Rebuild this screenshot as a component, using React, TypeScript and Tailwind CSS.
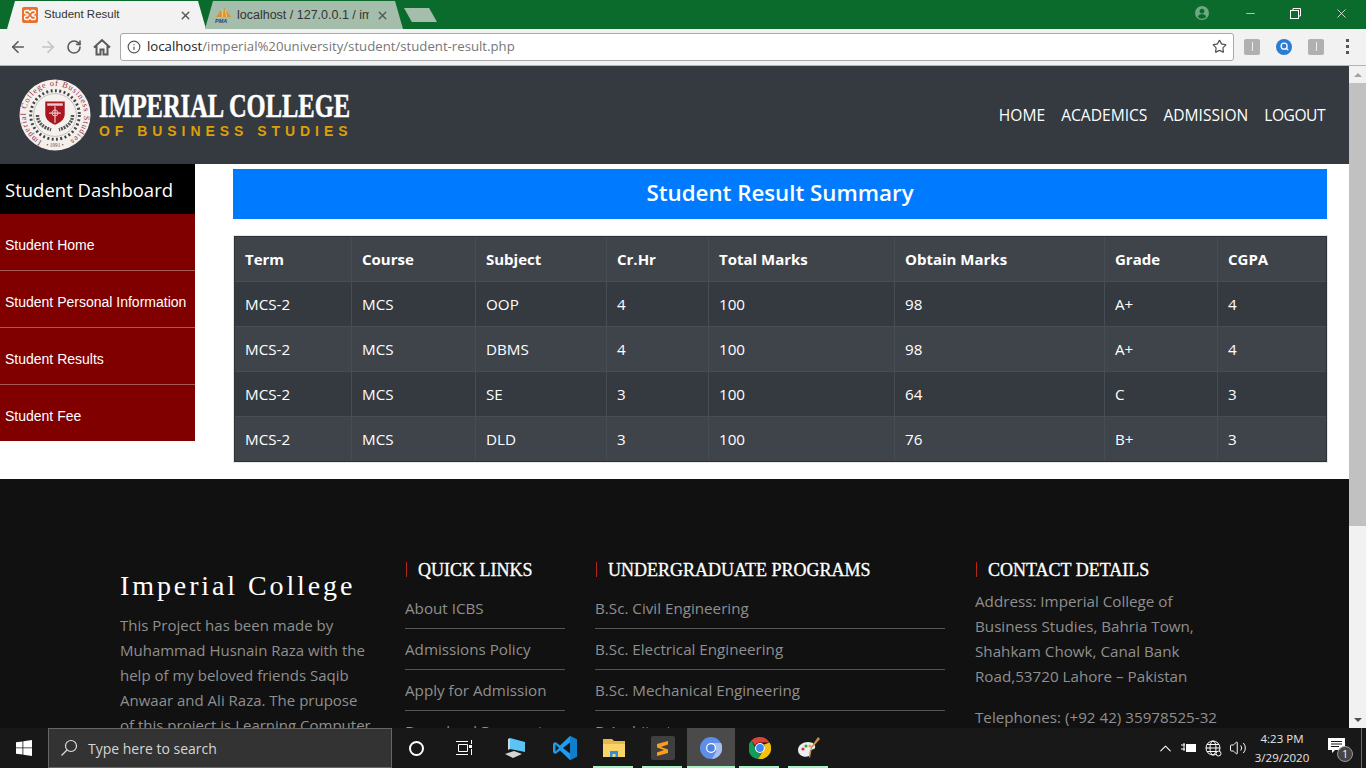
import React from 'react';
import { ArrowLeft, ArrowRight, RotateCw, Info, Star, X, Minus, ChevronUp, Volume2, Search } from 'lucide-react';

const sideLinks = ['Student Home', 'Student Personal Information', 'Student Results', 'Student Fee'];
const heads = ['Term', 'Course', 'Subject', 'Cr.Hr', 'Total Marks', 'Obtain Marks', 'Grade', 'CGPA'];
const colWidths = [117, 124, 131, 102, 186, 210, 113, 109];
const rows = [
  ['MCS-2', 'MCS', 'OOP', '4', '100', '98', 'A+', '4'],
  ['MCS-2', 'MCS', 'DBMS', '4', '100', '98', 'A+', '4'],
  ['MCS-2', 'MCS', 'SE', '3', '100', '64', 'C', '3'],
  ['MCS-2', 'MCS', 'DLD', '3', '100', '76', 'B+', '3'],
];
const quickLinks = ['About ICBS', 'Admissions Policy', 'Apply for Admission', 'Download Prospectus'];
const programs = ['B.Sc. Civil Engineering', 'B.Sc. Electrical Engineering', 'B.Sc. Mechanical Engineering', 'B.Architecture'];

// Browser tabs and toolbar
const BrowserChrome = () => (
  <div className="h-[66px] shrink-0 font-['Open_Sans',sans-serif]">
    <div className="h-[29px] bg-[#0a6b2d] flex items-end relative">
      <div className="ml-[7px] w-[199px] h-[28px] bg-[#f2f2f2] [clip-path:polygon(0_100%,8px_0,191px_0,100%_100%)] flex items-center pl-[15px] pr-[14px]">
        <XamppIcon />
        <span className="ml-[6px] text-[11.500px] text-[#333] flex-1 font-['Liberation_Sans',sans-serif]">Student Result</span>
        <X size={13} strokeWidth={2.5} className="text-[#555]" />
      </div>
      <div className="-ml-[1px] w-[198px] h-[28px] bg-[#a5bdab] [clip-path:polygon(0_100%,8px_0,190px_0,100%_100%)] flex items-center pl-[10px] pr-[14px]">
        <PmaIcon />
        <span className="ml-[5px] text-[12.500px] text-[#333] w-[132px] overflow-hidden whitespace-nowrap font-['Liberation_Sans',sans-serif]">localhost / 127.0.0.1 / imp</span>
        <span className="flex-1" />
        <X size={13} strokeWidth={2.5} className="text-[#555]" />
      </div>
      <div className="ml-[1px] mb-[7px] w-[33px] h-[14px] bg-[#a5bdab] [clip-path:polygon(0_0,76%_0,100%_100%,24%_100%)]" />
      <div className="flex-1" />
      <div className="self-start h-[29px] flex items-center text-white">
        <svg width="14" height="14" viewBox="0 0 14 14" className="mr-[35px] mb-[3px]">
          <circle cx="7" cy="7" r="7" fill="#6fa981" />
          <circle cx="7" cy="5.2" r="2.4" fill="#0a6b2d" />
          <path d="M2.8 11c.6-2.2 2.4-3 4.200-3s3.600.8 4.200 3a6 6 0 0 1-8.400 0z" fill="#0a6b2d" />
        </svg>
        <Minus size={13} strokeWidth={1.2} className="mr-[33px] mb-[3px]" />
        <svg width="11" height="11" viewBox="0 0 11 11" fill="none" stroke="white" className="mr-[33px] mb-[3px]">
          <rect x="0.5" y="2.5" width="8" height="8" />
          <path d="M3 2.500V.5h7.500v7.500H8.500" />
        </svg>
        <X size={15} strokeWidth={1.2} className="mr-[17px] mb-[3px]" />
      </div>
    </div>
    <div className="h-[37px] bg-[#f2f2f2] border-b border-[#b4b4b4] flex items-center pb-[1px]">
      <ArrowLeft size={18} strokeWidth={2.2} className="ml-[9px] text-[#5a5a5a]" />
      <ArrowRight size={18} strokeWidth={2.2} className="ml-[12px] text-[#c4c4c4]" />
      <RotateCw size={16} strokeWidth={2.4} className="ml-[9px] text-[#5a5a5a]" />
      <svg width="18" height="18" viewBox="0 0 18 18" fill="none" stroke="#5a5a5a" strokeWidth="2" className="ml-[11px]">
        <path d="M1 9.500 9 2l8 7.500M3.500 8v8.500H7.500V11.500h3v5h4V8" />
      </svg>
      <div className="ml-[9px] w-[1114px] h-[28px] bg-white border border-[#a9a9a9] rounded-[3px] flex items-center pl-[6px] pr-[6px]">
        <Info size={14} strokeWidth={2} className="text-[#555]" />
        <span className="ml-[6px] text-[13.200px] text-[#777] flex-1 whitespace-nowrap">
          <span className="text-[#222]">localhost</span>/imperial%20university/student/student-result.php
        </span>
        <Star size={15} strokeWidth={2} className="text-[#555]" />
      </div>
      <div className="ml-[10px] w-[16px] h-[16px] bg-[#b0b0b0] rounded-[2px] flex items-center justify-center">
        <span className="w-[1px] h-[9px] bg-[#eee]" />
      </div>
      <div className="ml-[16px] w-[16px] h-[16px] bg-[#2b7cd3] rounded-full flex items-center justify-center">
        <Search size={9} strokeWidth={3.5} className="text-white" />
      </div>
      <div className="ml-[16px] w-[16px] h-[16px] bg-[#b0b0b0] rounded-[2px] flex items-center justify-center">
        <span className="w-[1px] h-[9px] bg-[#eee]" />
      </div>
      <div className="ml-[22px] flex flex-col gap-[3px]">
        <span className="w-[3px] h-[3px] bg-[#555]" />
        <span className="w-[3px] h-[3px] bg-[#555]" />
        <span className="w-[3px] h-[3px] bg-[#555]" />
      </div>
    </div>
  </div>
);

const XamppIcon = () => (
  <svg width="16" height="16" viewBox="0 0 16 16">
    <rect width="16" height="16" rx="2" fill="#e8702a" />
    <path d="M4 3.500h2.500L8 5.500l1.500-2H12c1 0 1.500.8 1.500 1.800 0 .9-.5 1.700-1.500 1.700h-1L10 8l1 1h1c1 0 1.500.8 1.500 1.700 0 1-.5 1.800-1.500 1.800H9.500L8 10.500l-1.500 2H4c-1 0-1.500-.8-1.500-1.800C2.500 9.800 3 9 4 9h1l1-1-1-1H4C3 7 2.500 6.200 2.500 5.300 2.500 4.300 3 3.500 4 3.500z" fill="none" stroke="#fff" strokeWidth="1.400" />
  </svg>
);

const PmaIcon = () => (
  <svg width="17" height="16" viewBox="0 0 17 16">
    <path d="M1 10C3 8 5 4 7 2l1 8zM8 10l1-9c2 2 5 6 7 9z" fill="#d9952b" />
    <path d="M7 2l.5 8M10.500 3l1 7" stroke="#f5e2a8" strokeWidth=".7" />
    <text x="0" y="15.500" fontSize="5.500" fontWeight="700" fontStyle="italic" fill="#2c3e70" fontFamily="Liberation Sans, sans-serif">PMA</text>
  </svg>
);

// College seal, drawn since there is no image file
const Seal = () => (
  <svg width="74" height="72" viewBox="0 0 74 74" className="shrink-0">
    <defs>
      <path id="sealRing" d="M23.500 64 A30 30 0 1 1 50.500 64" />
    </defs>
    <circle cx="37" cy="37" r="36.500" fill="#f4f0ee" />
    <text fontSize="8.500" fill="#97303a" fontFamily="Liberation Serif, serif">
      <textPath href="#sealRing" textLength="158">Imperial College of Business Studies</textPath>
    </text>
    <text x="37" y="70" textAnchor="middle" fontSize="5.500" fill="#555" fontFamily="Liberation Serif, serif">• 1991 •</text>
    <circle cx="37" cy="37" r="25" fill="none" stroke="#444" strokeWidth="3" strokeDasharray="2 2.500" />
    <circle cx="37" cy="37" r="22" fill="#f4f1ef" stroke="#aaa" strokeWidth=".7" />
    <path d="M19 37c0 8 6 13 14 15M55 37c0 8-6 13-14 15" fill="none" stroke="#555" strokeWidth="3.500" strokeDasharray="2 1" />
    <path d="M27 23h20v13c0 6-5 9-10 11-5-2-10-5-10-11z" fill="#a91620" />
    <path d="M37 28v17M31 35h12" stroke="#e9c9c9" strokeWidth="1.200" />
    <circle cx="37" cy="35" r="3" fill="none" stroke="#e9c9c9" />
    <rect x="29" y="25" width="16" height="2.500" fill="#e9c9c9" />
  </svg>
);

const SiteHeader = () => (
  <header className="h-[98px] shrink-0 bg-[#343a40] flex items-center pl-[18px] pr-[24px]">
    <Seal />
    <div className="ml-[7px] -mt-[2px] w-[251px]">
      <div className="font-['Liberation_Serif',serif] font-bold text-[33px] leading-[34px] text-white [-webkit-text-stroke:0.5px_white] whitespace-nowrap origin-left scale-x-[0.742]">IMPERIAL COLLEGE</div>
      <div className="font-['Liberation_Sans',sans-serif] font-bold text-[14px] leading-[16px] tracking-[4.950px] text-[#dd9f0a] whitespace-nowrap">OF BUSINESS STUDIES</div>
    </div>
    <nav className="ml-auto mt-[2px] flex gap-[16px] text-white text-[15.600px] font-['Open_Sans',sans-serif]">
      <span>HOME</span>
      <span>ACADEMICS</span>
      <span>ADMISSION</span>
      <span className="tracking-[-0.5px]">LOGOUT</span>
    </nav>
  </header>
);

const Sidebar = () => (
  <aside className="w-[195px] shrink-0">
    <div className="h-[50px] bg-black text-white text-[18.500px] flex items-center pl-[5px] pt-[2px] font-['Open_Sans',sans-serif]">Student Dashboard</div>
    {sideLinks.map((link, i) => (
      <div
        key={link}
        className={`bg-[#800000] text-white text-[14px] flex items-center pl-[5px] pt-[6px] font-['Liberation_Sans',sans-serif] ${i < 3 ? 'h-[57px] border-b border-[#a85a5a]' : 'h-[56px]'}`}
      >
        {link}
      </div>
    ))}
  </aside>
);

const ResultPanel = () => (
  <main className="flex-1 pl-[38px] pr-[22px] pt-[5px] font-['Open_Sans',sans-serif]">
    <h1 className="h-[50px] pb-[3px] bg-[#007bff] text-white text-[22.300px] font-semibold flex items-center justify-center">Student Result Summary</h1>
    <table className="mt-[17px] ml-[1px] w-[1092px] table-fixed border-collapse outline outline-1 -outline-offset-1 outline-[#2e3338] shadow-[0_0_0_1px_#e6e6e6] text-white text-[15.200px]">
      <colgroup>
        {colWidths.map((w, i) => (
          <col key={i} style={{ width: w }} />
        ))}
      </colgroup>
      <thead>
        <tr className="h-[45px] bg-[#3f444b]">
          {heads.map((h) => (
            <th key={h} className="border border-[#454d55] text-left font-bold text-[15px] pl-[10px]">{h}</th>
          ))}
        </tr>
      </thead>
      <tbody>
        {rows.map((row, i) => (
          <tr key={i} className={`h-[45px] ${i % 2 === 0 ? 'bg-[#343a40]' : 'bg-[#3f444b]'}`}>
            {row.map((cell, j) => (
              <td key={j} className="border border-[#454d55] pl-[10px]">{cell}</td>
            ))}
          </tr>
        ))}
      </tbody>
    </table>
  </main>
);

const FooterHeading = ({ children }: { children: React.ReactNode }) => (
  <h3 className="ml-[1px] pl-[11px] pt-[2px] border-l border-[#b0281c] h-[15px] flex items-center font-['Liberation_Serif',serif] font-normal text-white [-webkit-text-stroke:0.3px_white] text-[18px] whitespace-nowrap">{children}</h3>
);

const LinkList = ({ items }: { items: string[] }) => (
  <ul className="mt-[11px]">
    {items.map((item) => (
      <li key={item} className="h-[41px] flex items-center border-b border-[#555] text-[#8f8f8f] text-[15.200px] whitespace-nowrap">{item}</li>
    ))}
  </ul>
);

const SiteFooter = () => (
  <footer className="bg-[#111] h-[300px] flex pl-[120px] pt-[83px] font-['Open_Sans',sans-serif]">
    <div className="w-[285px] pt-[8px]">
      <h2 className="font-['Liberation_Serif',serif] text-white text-[28px] leading-[32px] tracking-[2.900px]">Imperial College</h2>
      <p className="mt-[11px] w-[255px] text-[#8f8f8f] text-[15px] leading-[25px]">
        This Project has been made by Muhammad Husnain Raza with the help of my beloved friends Saqib Anwaar and Ali Raza. The prupose of this project is Learning Computer
      </p>
    </div>
    <div className="w-[160px]">
      <FooterHeading>QUICK LINKS</FooterHeading>
      <LinkList items={quickLinks} />
    </div>
    <div className="ml-[30px] w-[350px]">
      <FooterHeading>UNDERGRADUATE PROGRAMS</FooterHeading>
      <LinkList items={programs} />
    </div>
    <div className="ml-[30px] w-[240px]">
      <FooterHeading>CONTACT DETAILS</FooterHeading>
      <p className="mt-[12px] text-[#8f8f8f] text-[15.200px] leading-[25px]">
        Address: Imperial College of Business Studies, Bahria Town, Shahkam Chowk, Canal Bank Road,53720 Lahore – Pakistan
      </p>
      <p className="mt-[16px] text-[#8f8f8f] text-[15.200px] leading-[25px] whitespace-nowrap">Telephones: (+92 42) 35978525-32</p>
    </div>
  </footer>
);

const Scrollbar = () => (
  <div className="w-[17px] shrink-0 bg-[#f1f1f1] flex flex-col items-center">
    <div className="h-[17px] flex items-center justify-center">
      <span className="w-0 h-0 border-x-[4px] border-x-transparent border-b-[4px] border-b-[#a3a3a3]" />
    </div>
    <div className="w-full h-[443px] bg-[#c1c1c1]" />
    <div className="flex-1" />
    <div className="h-[17px] flex items-center justify-center">
      <span className="w-0 h-0 border-x-[4px] border-x-transparent border-t-[4px] border-t-[#505050]" />
    </div>
  </div>
);

const TaskIcon = ({ children, active, open }: { children: React.ReactNode; active?: boolean; open?: boolean }) => (
  <div className={`relative h-full flex items-center justify-center ${active ? 'w-[48px] bg-[#4a4a4a]' : 'w-[49px]'}`}>
    {children}
    {open && <span className={`absolute bottom-0 h-[2px] bg-[#a9f0c4] ${active ? 'inset-x-0' : 'left-[4px] right-[5px]'}`} />}
  </div>
);

const Taskbar = () => (
  <div className="h-[40px] shrink-0 bg-[#181818] flex items-center font-['Open_Sans',sans-serif]">
    <svg width="16" height="16" viewBox="0 0 16 16" className="ml-[16px]">
      <path d="M0 2.300 6.500 1.400V7.500H0zM7.300 1.300 16 0V7.500H7.300zM0 8.300H6.500V14.600L0 13.700zM7.300 8.300H16V16L7.300 14.700z" fill="#fff" />
    </svg>
    <div className="ml-[16px] w-[344px] h-full bg-[#333] border border-[#666] flex items-center pl-[11px]">
      <svg width="18" height="18" viewBox="0 0 18 18" fill="none" stroke="#ddd" strokeWidth="1.200">
        <circle cx="11" cy="7" r="5.500" />
        <path d="M7 11l-5.500 5.500" />
      </svg>
      <span className="ml-[10px] text-[#d5d5d5] text-[14px]">Type here to search</span>
    </div>
    <div className="ml-[17px] w-[15px] h-[15px] rounded-full border-[2.500px] border-white" />
    <svg width="16" height="16" viewBox="0 0 16 16" fill="none" stroke="#fff" className="ml-[32px]">
      <path d="M0 1.500h12M2.500 4.500h9v7h-9zM0 14.500h12" />
      <rect x="13" y="5" width="3" height="3" fill="#fff" stroke="none" />
      <path d="M15.500 0v4M15.500 9v6" />
    </svg>
    <div className="ml-[19px] h-full flex items-center">
      <TaskIcon>
        <svg width="24" height="22" viewBox="0 0 24 22">
          <path d="M6 1l15 4v10L6 12z" fill="#5cc3f5" />
          <path d="M6 1l-2 1v11l2-1z" fill="#cfd6dc" />
          <path d="M1 17l9-3 8 3-9 4z" fill="#d5d5d5" />
        </svg>
      </TaskIcon>
      <TaskIcon>
        <svg width="24" height="24" viewBox="0 0 24 24">
          <path d="M17 0l7 3.500v17L17 24 7 14.500l-4.500 3.500L0 16.500v-9L2.500 6 7 9.500z" fill="#1f9cf0" />
          <path d="M17 6.500v11L10 12z" fill="#181818" />
          <path d="M2.500 8.500v7L6 12z" fill="#181818" />
          <path d="M17 0l7 3.500v17L17 24z" fill="#0f7fcc" />
        </svg>
      </TaskIcon>
      <TaskIcon open>
        <svg width="24" height="20" viewBox="0 0 24 20">
          <path d="M1 1h9l2 2h11v4H1z" fill="#e9b64a" />
          <path d="M1 6h22v13H1z" fill="#fbd469" />
          <path d="M8 19v-6h8v6h-2.500v-3h-3v3z" fill="#2f8fdc" />
        </svg>
      </TaskIcon>
      <TaskIcon open>
        <div className="w-[24px] h-[24px] bg-[#3f3f3f] rounded-[2px] flex items-center justify-center">
          <svg width="13" height="17" viewBox="0 0 13 17">
            <path d="M12 1v3.500L5 7l7 2.500V13L1 16v-3.500L8 10 1 7.500V4z" fill="#f89d1c" />
          </svg>
        </div>
      </TaskIcon>
      <TaskIcon active open>
        <svg width="22" height="22" viewBox="0 0 22 22">
          <circle cx="11" cy="11" r="11" fill="#5e8ee8" />
          <path d="M11 6h10a11 11 0 0 1-9 16l4.500-8z" fill="#a5c0f0" />
          <circle cx="11" cy="11" r="5" fill="#fff" />
          <circle cx="11" cy="11" r="3.800" fill="#4f82de" />
        </svg>
      </TaskIcon>
      <TaskIcon open>
        <svg width="22" height="22" viewBox="0 0 22 22">
          <path d="M11 0a11 11 0 0 1 9.500 5.500H11a5.500 5.500 0 0 0-5 3L2.300 3.500A11 11 0 0 1 11 0z" fill="#db4437" />
          <path d="M2.300 3.500L6.500 11a5 5 0 0 0 6 4.500L9 22A11 11 0 0 1 2.300 3.500z" fill="#0f9d58" />
          <path d="M20.500 5.500A11 11 0 0 1 9 22l4.500-7.500A5 5 0 0 0 15 7.500z" fill="#f4c20d" />
          <circle cx="11" cy="11" r="5" fill="#fff" />
          <circle cx="11" cy="11" r="3.900" fill="#4285f4" />
        </svg>
      </TaskIcon>
      <TaskIcon open>
        <svg width="24" height="24" viewBox="0 0 24 24">
          <path d="M1 14c0-5 5-8 10-8 5 0 8 3 7 6-1 2-4 1-5 3s1 3-1 5c-4 2-11 0-11-6z" fill="#e8eef2" />
          <circle cx="6" cy="13" r="1.600" fill="#d33" />
          <circle cx="9" cy="10" r="1.600" fill="#3a3" />
          <circle cx="13" cy="10" r="1.600" fill="#e8a33a" />
          <path d="M21 1l2 2-8 9-2 10-1-1 2-10z" fill="#c98f4a" />
        </svg>
      </TaskIcon>
    </div>
    <div className="ml-auto flex items-center text-white h-full">
      <ChevronUp size={19} strokeWidth={1.300} className="mr-[6px]" />
      <svg width="16" height="12" viewBox="0 0 16 12" className="mr-[8px]">
        <path d="M0 3h4M0 7h4M3 1v8" stroke="#fff" />
        <rect x="5" y="2" width="10" height="8" fill="#fff" />
      </svg>
      <svg width="17" height="17" viewBox="0 0 17 17" fill="none" stroke="#fff" className="mr-[7px]">
        <circle cx="8" cy="8" r="7" />
        <ellipse cx="8" cy="8" rx="3" ry="7" />
        <path d="M1 8h14M2 4.500h12M2 11.500h12" />
        <circle cx="13.500" cy="13.500" r="2.500" fill="#181818" />
      </svg>
      <Volume2 size={18} strokeWidth={1.300} className="mr-[4px]" />
      <div className="w-[62px] text-center text-[11.500px] leading-[19px] text-[#e5e5e5]">
        <div>4:23 PM</div>
        <div>3/29/2020</div>
      </div>
      <div className="ml-[15px] relative w-[24px] h-[24px]">
        <svg width="17" height="16" viewBox="0 0 17 16" className="absolute left-0 top-[2px]">
          <path d="M0 0h17v12H7l-3 3v-3H0z" fill="#fff" />
          <path d="M3 3.500h11M3 6h11M3 8.500h8" stroke="#181818" />
        </svg>
        <span className="absolute right-[-1px] bottom-[-2px] w-[16px] h-[16px] rounded-full bg-[#444] border border-[#999] text-[10px] leading-[14px] text-center text-white">1</span>
      </div>
      <div className="ml-[9px] mr-[4px] w-[1px] h-full bg-[#6a6a6a]" />
    </div>
  </div>
);

export default function App() {
  return (
    <div className="h-screen flex flex-col overflow-hidden bg-white">
      <BrowserChrome />
      <div className="flex-1 min-h-0 flex">
        <div className="flex-1 min-w-0 overflow-hidden">
          <SiteHeader />
          <div className="h-[315px] flex">
            <Sidebar />
            <ResultPanel />
          </div>
          <SiteFooter />
        </div>
        <Scrollbar />
      </div>
      <Taskbar />
    </div>
  );
}
